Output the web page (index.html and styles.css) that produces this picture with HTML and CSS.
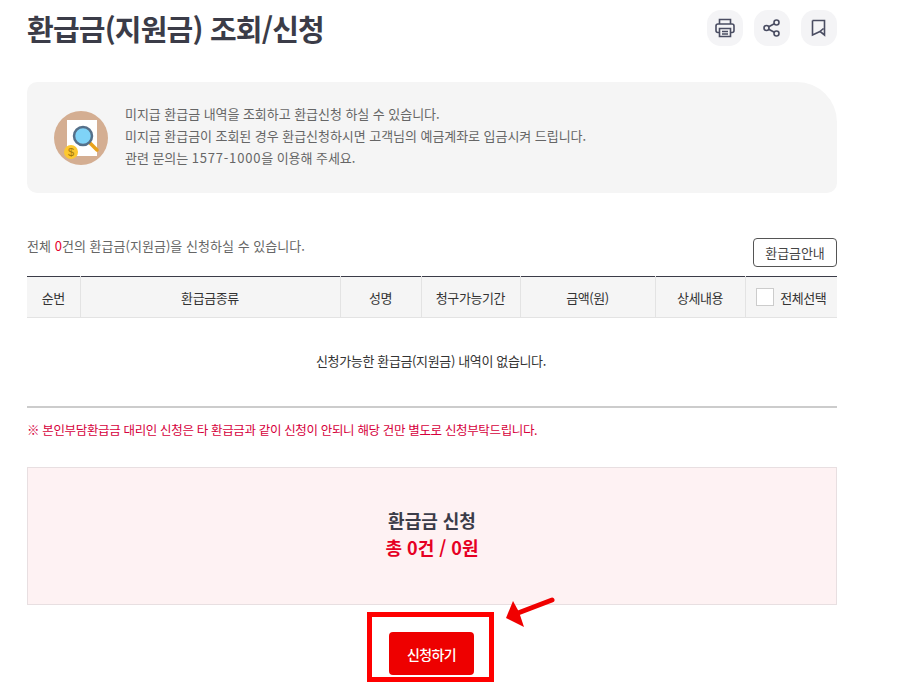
FILE: index.html
```html
<!DOCTYPE html>
<html lang="ko">
<head>
    <meta charset="UTF-8">
    <meta name="viewport" content="width=device-width, initial-scale=1.0">
    <title>환급금(지원금) 조회/신청</title>
    <link rel="stylesheet" href="styles.css">
</head>
<body>
    <div class="container">
        <div class="title-row">
            <h1>환급금(지원금) 조회/신청</h1>
            <div class="tools">
                <button class="tool" type="button" aria-label="인쇄">
                    <svg width="22" height="22" viewBox="0 0 22 22" fill="none" stroke="#4a4d62" stroke-width="1.6">
                        <path d="M5.5 7V2.5h11V7"/>
                        <path d="M5.5 15.5H4a2 2 0 0 1-2-2V9a2 2 0 0 1 2-2h14a2 2 0 0 1 2 2v4.500a2 2 0 0 1-2 2h-1.500"/>
                        <path d="M5.500 11.500h11v8h-11z"/>
                        <path d="M8 14.500h6M8 17h6"/>
                    </svg>
                </button>
                <button class="tool" type="button" aria-label="공유">
                    <svg width="20" height="20" viewBox="0 0 20 20" fill="none" stroke="#4a4d62" stroke-width="1.6">
                        <circle cx="4.500" cy="10" r="2.500"/>
                        <circle cx="14.500" cy="4.500" r="2.500"/>
                        <circle cx="14.500" cy="15.500" r="2.500"/>
                        <path d="M6.700 8.800l5.600-3.100M6.700 11.200l5.600 3.100"/>
                    </svg>
                </button>
                <button class="tool" type="button" aria-label="북마크">
                    <svg width="20" height="20" viewBox="0 0 20 20" fill="none" stroke="#4a4d62" stroke-width="1.600">
                        <path d="M3.500 2.500h12v14.500l-4.500-3.500 3.500-3"/>
                        <path d="M3.500 2.500V17l7.500-3.500"/>
                    </svg>
                </button>
            </div>
        </div>

        <div class="info-box">
            <svg class="info-icon" width="54" height="54" viewBox="0 0 54 54">
                <circle cx="27" cy="27" r="27" fill="#d4ae92"/>
                <rect x="13" y="9" width="30" height="36" fill="#fff"/>
                <path d="M35 31l8 8" stroke="#e8a21c" stroke-width="3.500" stroke-linecap="round"/>
                <circle cx="29" cy="25" r="9" fill="#7fd3f7" stroke="#55708a" stroke-width="2.500"/>
                <circle cx="17" cy="41" r="7" fill="#fdc82f"/>
                <text x="17" y="45" class="coin">$</text>
            </svg>
            <div class="info-text">
                <p>미지급 환급금 내역을 조회하고 환급신청 하실 수 있습니다.</p>
                <p>미지급 환급금이 조회된 경우 환급신청하시면 고객님의 예금계좌로 입금시켜 드립니다.</p>
                <p>관련 문의는 <span class="tel">1577-1000</span>을 이용해 주세요.</p>
            </div>
        </div>

        <div class="list-head">
            <p>전체 <span class="count">0</span>건의 환급금(지원금)을 신청하실 수 있습니다.</p>
            <button class="guide-btn" type="button">환급금안내</button>
        </div>

        <table class="refund-table">
            <colgroup>
                <col class="c1"><col class="c2"><col class="c3"><col class="c4"><col class="c5"><col class="c6"><col class="c7">
            </colgroup>
            <thead>
                <tr>
                    <th>순번</th>
                    <th>환급금종류</th>
                    <th>성명</th>
                    <th>청구가능기간</th>
                    <th>금액(원)</th>
                    <th>상세내용</th>
                    <th><span class="check-all"><span class="checkbox"></span>전체선택</span></th>
                </tr>
            </thead>
            <tbody>
                <tr>
                    <td colspan="7"><span class="empty">신청가능한 환급금(지원금) 내역이 없습니다.</span></td>
                </tr>
            </tbody>
        </table>

        <p class="notice">※ 본인부담환급금 대리인 신청은 타 환급금과 같이 신청이 안되니 해당 건만 별도로 신청부탁드립니다.</p>

        <div class="summary">
            <strong>환급금 신청</strong>
            <em>총 0건 / 0원</em>
        </div>

        <div class="actions">
            <button class="apply-btn" type="button">신청하기</button>
            <!-- annotation over the button -->
            <div class="red-box"></div>
            <svg class="red-arrow" width="52" height="32" viewBox="0 0 52 32">
                <path d="M48 4L14 17" stroke="#f00000" stroke-width="5" stroke-linecap="round"/>
                <path d="M2 22L9 5l6 11 5 15z" fill="#f00000"/>
            </svg>
        </div>
    </div>
</body>
</html>
```

FILE: styles.css
```css
html, body {
    margin: 0;
    padding: 0;
    height: 689px;
    overflow: hidden;
    background-color: #fff;
    font-family: "Noto Sans CJK KR", "Noto Sans", sans-serif;
    color: #333;
}

.container {
    width: 810px;
    margin-left: 27px;
}

p {
    margin: 0;
}

.title-row {
    display: flex;
    align-items: center;
    justify-content: space-between;
    height: 56px;
}

h1 {
    margin: 0;
    font-size: 29px;
    font-weight: 700;
    letter-spacing: -0.8px;
    color: #3b3c48;
    line-height: 38px;
}

.tools {
    display: flex;
    gap: 11px;
}

.tool {
    display: flex;
    align-items: center;
    justify-content: center;
    width: 36px;
    height: 36px;
    padding: 0;
    border: 0;
    border-radius: 14px;
    background-color: #f4f4f6;
}

.info-box {
    display: flex;
    align-items: center;
    gap: 17px;
    height: 111px;
    margin-top: 26px;
    padding-left: 27px;
    box-sizing: border-box;
    background-color: #f5f5f5;
    border-radius: 10px 40px 10px 10px;
}

.info-icon {
    flex: none;
}

.coin {
    font-family: "Liberation Sans", sans-serif;
    font-size: 11px;
    fill: #a5780c;
    text-anchor: middle;
}

.info-text {
    margin-top: -4px;
    font-size: 13px;
    line-height: 22px;
    letter-spacing: -0.05px;
    color: #666;
}

.tel {
    letter-spacing: 0.8px;
}

.list-head {
    display: flex;
    align-items: flex-start;
    justify-content: space-between;
    height: 38px;
    margin-top: 45px;
    font-size: 13px;
    letter-spacing: 0.03px;
    color: #666;
}

.list-head p {
    margin-top: -2px;
    line-height: 20px;
}

.count {
    color: #e4002b;
}

.guide-btn {
    width: 84px;
    height: 29px;
    padding: 0;
    border: 1px solid #555;
    border-radius: 4px;
    background-color: #fff;
    font-family: inherit;
    font-size: 13px;
    letter-spacing: -0.1px;
    color: #444;
}

.refund-table {
    width: 810px;
    border-collapse: collapse;
    table-layout: fixed;
    border-top: 1px solid #3b3c48;
    border-bottom: 2px solid #ccc;
}

.c1 { width: 53px; }
.c2 { width: 260px; }
.c3 { width: 81px; }
.c4 { width: 99px; }
.c5 { width: 135px; }
.c6 { width: 90px; }
.c7 { width: 92px; }

.refund-table th {
    height: 40px;
    padding: 0;
    background-color: #f5f5f5;
    border-left: 1px solid #e3e3e3;
    border-bottom: 1px solid #e3e3e3;
    font-size: 13px;
    font-weight: 400;
    letter-spacing: -0.4px;
    color: #333;
}

.refund-table th:first-child {
    border-left: 0;
}

.refund-table td {
    height: 88px;
    padding: 0;
    text-align: center;
    font-size: 13px;
    letter-spacing: -0.36px;
    color: #333;
}

.empty {
    display: block;
    margin-top: -4px;
    margin-right: 2px;
}

.check-all {
    display: flex;
    align-items: center;
    justify-content: center;
    gap: 6px;
}

.checkbox {
    width: 16px;
    height: 16px;
    border: 1px solid #ccc;
    background-color: #fff;
}

.notice {
    margin-top: 12px;
    font-size: 12.5px;
    line-height: 20px;
    letter-spacing: -0.35px;
    color: #d6003c;
}

.summary {
    display: flex;
    flex-direction: column;
    align-items: center;
    justify-content: center;
    gap: 2px;
    height: 138px;
    margin-top: 27px;
    padding-bottom: 4px;
    box-sizing: border-box;
    border: 1px solid #e8dfe1;
    background-color: #fef2f3;
}

.summary strong {
    font-size: 18px;
    font-weight: 700;
    line-height: 24px;
    color: #3b3c48;
}

.summary em {
    font-size: 18px;
    font-style: normal;
    font-weight: 700;
    line-height: 26px;
    color: #e60023;
}

.actions {
    position: relative;
    display: flex;
    justify-content: center;
    margin-top: 27px;
    padding-right: 1px;
}

.apply-btn {
    width: 85px;
    height: 43px;
    padding: 0;
    border: 0;
    border-radius: 4px;
    background-color: #ee0000;
    font-family: inherit;
    font-size: 14px;
    font-weight: 500;
    letter-spacing: -0.6px;
    color: #fff;
}

.red-box {
    position: absolute;
    left: 340px;
    top: -20px;
    width: 127px;
    height: 70px;
    box-sizing: border-box;
    border: 5px solid #ff0000;
}

.red-arrow {
    position: absolute;
    left: 477px;
    top: -36px;
}
```
